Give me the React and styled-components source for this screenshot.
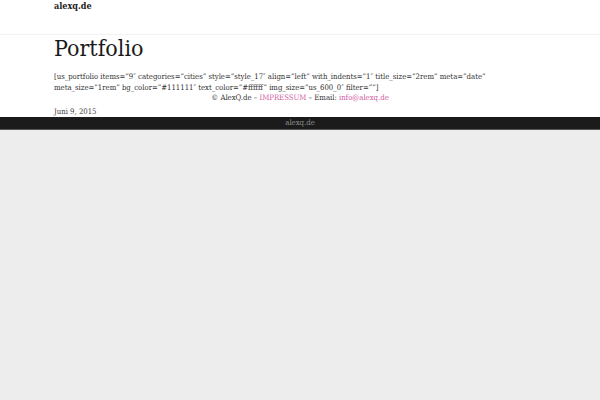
import React from "react";
import styled, { createGlobalStyle } from "styled-components";

const GlobalStyle = createGlobalStyle`
  html, body {
    margin: 0;
    padding: 0;
    background: #ededed;
  }
  body {
    font-family: "DejaVu Serif Condensed", "DejaVu Serif", serif;
    font-stretch: semi-condensed;
    color: #333;
  }
`;

const Header = styled.header`
  background: #fff;
  height: 35px;
  border-bottom: 1px solid #f2f2f2;
  box-sizing: border-box;
  padding: 1px 54px 0;
`;

const Logo = styled.a`
  display: block;
  font-size: 9px;
  line-height: 10px;
  font-weight: bold;
  color: #222;
  text-decoration: none;
`;

const Main = styled.main`
  background: #fff;
  padding: 0 54px;
  height: 82px;
  box-sizing: border-box;
  overflow: hidden;
`;

const Title = styled.h1`
  margin: 0;
  font-weight: normal;
  font-size: 23px;
  line-height: 26px;
  color: #1a1a1a;
`;

const Shortcode = styled.p`
  margin: 11px 0 0;
  font-size: 7.7px;
  line-height: 10.5px;
  color: #333;
`;

const Credits = styled.p`
  margin: 0;
  text-align: center;
  font-size: 7.7px;
  line-height: 10.5px;
  color: #333;
`;

const Link = styled.a`
  color: #d2609f;
  text-decoration: none;
`;

const Date = styled.div`
  margin-top: 2px;
  font-size: 7.7px;
  line-height: 12px;
  color: #444;
`;

const Footer = styled.footer`
  background: #1b1b1b;
  height: 12px;
  line-height: 12px;
  text-align: center;
  font-size: 7.7px;
  color: #8f8f8f;
  border-bottom: 1px solid #555;
`;

export default function App() {
  return (
    <>
      <GlobalStyle />
      <Header>
        <Logo href="#">alexq.de</Logo>
      </Header>
      <Main>
        <Title>Portfolio</Title>
        <Shortcode>
          [us_portfolio items=”9″ categories=”cities” style=”style_17″ align=”left” with_indents=”1″ title_size=”2rem” meta=”date”
          meta_size=”1rem” bg_color=”#111111″ text_color=”#ffffff” img_size=”us_600_0″ filter=””]
        </Shortcode>
        <Credits>
          © AlexQ.de – <Link href="#">IMPRESSUM</Link> – Email: <Link href="#">info@alexq.de</Link>
        </Credits>
        <Date>Juni 9, 2015</Date>
      </Main>
      <Footer>alexq.de</Footer>
    </>
  );
}
